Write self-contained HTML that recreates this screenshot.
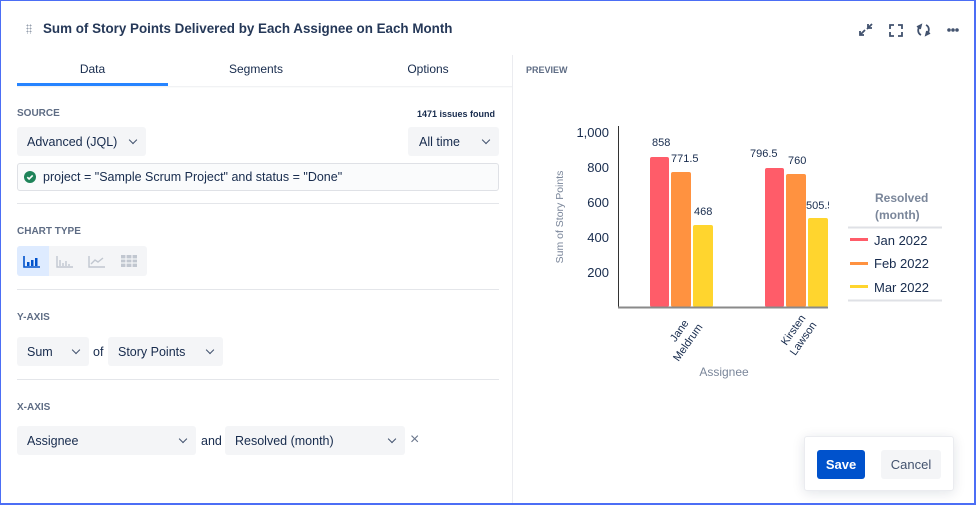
<!DOCTYPE html>
<html><head><meta charset="utf-8"><style>
*{box-sizing:border-box;margin:0;padding:0}
body{width:976px;height:505px;overflow:hidden;background:#fff;font-family:"Liberation Sans",sans-serif;color:#172b4d;position:relative}
.frame{position:absolute;inset:0;border:1px solid #4c6ef5;border-right-width:2px;border-bottom-width:2px}
.a{position:absolute;white-space:nowrap}
.lbl{font-size:10px;font-weight:bold;color:#5e6c84}
.sel{position:absolute;background:#f4f5f7;border-radius:3px;font-size:12.5px;color:#172b4d;padding:0 10px;display:flex;align-items:center;justify-content:space-between;height:29px;white-space:nowrap}
.chev{width:6px;height:6px;border-right:1.6px solid #42526e;border-bottom:1.6px solid #42526e;transform:rotate(45deg);margin-top:-4px;margin-left:10px;flex:none}
.hr{position:absolute;left:17px;width:482px;height:1px;background:#e4e6ea}
svg text{font-family:"Liberation Sans",sans-serif}
</style></head><body>
<div class="a" style="left:26px;top:24px;width:6px;height:10px;background:radial-gradient(circle,#97a0af 0.8px,transparent 1px) 0 0/3px 3px"></div>
<div class="a" style="left:43px;top:21px;font-size:13.4px;font-weight:bold;color:#253858">Sum of Story Points Delivered by Each Assignee on Each Month</div>
<svg class="a" style="left:856px;top:20px" width="110" height="20" viewBox="0 0 110 20" fill="none" stroke="#42526e" stroke-width="1.8">
<path d="M4 15l5-5M4 11v4h4M16 4l-5 5M16 8h-4V4"/>
<path d="M34 9V5h4M42 5h4v4M46 12v4h-4M38 16h-4v-4"/>
<path d="M65 6a5 5 0 0 0 0 9M61 7l4-2-1 4M70 14a5 5 0 0 0 0-9M74 13l-4 2 1-4"/>
<circle cx="93" cy="10" r="0.9" fill="#42526e"/><circle cx="97" cy="10" r="0.9" fill="#42526e"/><circle cx="101" cy="10" r="0.9" fill="#42526e"/>
</svg>
<div class="a" style="left:512px;top:55px;width:1px;height:450px;background:#ebecf0"></div>
<div class="a" style="left:17px;top:62px;width:151px;text-align:center;font-size:12px">Data</div>
<div class="a" style="left:168px;top:62px;width:176px;text-align:center;font-size:12px">Segments</div>
<div class="a" style="left:344px;top:62px;width:168px;text-align:center;font-size:12px">Options</div>
<div class="a" style="left:17px;top:86px;width:495px;height:2px;background:linear-gradient(#eceef1,#fff)"></div>
<div class="a" style="left:17px;top:83px;width:151px;height:3px;background:#2684ff"></div>
<div class="a lbl" style="left:17px;top:108px">SOURCE</div>
<div class="a" style="left:417px;top:109px;font-size:9px;font-weight:bold">1471 issues found</div>
<div class="sel" style="left:17px;top:127px;width:129px">Advanced (JQL)<span class="chev"></span></div>
<div class="sel" style="left:408px;top:127px;width:91px;padding-left:11px">All time<span class="chev"></span></div>
<div class="a" style="left:17px;top:163px;width:482px;height:28px;border:1px solid #dfe1e6;border-radius:3px;background:#fafbfc;font-size:12.5px;padding:6px 0 0 25px">project = "Sample Scrum Project" and status = "Done"</div>
<svg class="a" style="left:23px;top:170px" width="14" height="14"><circle cx="7" cy="7" r="6" fill="#1f845a"/><path d="M4.3 7.2l1.8 1.8 3.6-3.6" stroke="#fff" stroke-width="1.6" fill="none"/></svg>
<div class="hr" style="top:203px"></div>
<div class="a lbl" style="left:17px;top:226px">CHART TYPE</div>
<div class="a" style="left:17px;top:246px;width:130px;height:30px;background:#f4f5f7;border-radius:3px"></div>
<div class="a" style="left:17px;top:246px;width:32px;height:30px;background:#deebff;border-radius:3px 0 0 3px"></div>
<svg class="a" style="left:22px;top:251px" width="120" height="20" fill="none">
<path d="M2 5v11h16" stroke="#0052cc" stroke-width="1.6"/><rect x="5" y="11" width="2.5" height="4" fill="#0052cc"/><rect x="9" y="9" width="2.5" height="6" fill="#0052cc"/><rect x="13" y="7" width="2.5" height="8" fill="#0052cc"/>
<g stroke="#c1c7d0" stroke-width="1.4"><path d="M35 5v11h16M38 9v6M41 12v3M44 10v5M47 13v2"/><path d="M67 5v11h16M69 13l4-4 3 2 5-4"/></g>
<rect x="99" y="4" width="16" height="12" fill="#c1c7d0"/><path d="M99 8h16M99 12h16M104 4v12M110 4v12" stroke="#f4f5f7" stroke-width="1.2"/>
</svg>
<div class="hr" style="top:289px"></div>
<div class="a lbl" style="left:17px;top:312px">Y-AXIS</div>
<div class="sel" style="left:17px;top:337px;width:72px">Sum<span class="chev"></span></div>
<div class="a" style="left:93px;top:345px;font-size:12.5px">of</div>
<div class="sel" style="left:108px;top:337px;width:115px">Story Points<span class="chev"></span></div>
<div class="hr" style="top:379px"></div>
<div class="a lbl" style="left:17px;top:402px">X-AXIS</div>
<div class="sel" style="left:17px;top:426px;width:179px">Assignee<span class="chev"></span></div>
<div class="a" style="left:201px;top:434px;font-size:12.5px">and</div>
<div class="sel" style="left:225px;top:426px;width:180px">Resolved (month)<span class="chev"></span></div>
<div class="a" style="left:410px;top:431px;font-size:16px;color:#6b778c">×</div>
<div class="a lbl" style="left:526px;top:65px;font-size:9px">PREVIEW</div>
<svg class="a" style="left:0;top:0" width="976" height="505">
<g font-size="13" fill="#172b4d" text-anchor="end"><text x="609" y="137">1,000</text><text x="609" y="172">800</text><text x="609" y="207">600</text><text x="609" y="242">400</text><text x="609" y="277">200</text></g>
<text transform="translate(563,217) rotate(-90)" font-size="10.5" fill="#7a869a" text-anchor="middle">Sum of Story Points</text>
<g>
<rect x="650" y="157" width="19" height="150" rx="2" fill="#ff5c69"/><rect x="671" y="172" width="20" height="135" rx="2" fill="#ff9240"/><rect x="693" y="225" width="20" height="82" rx="2" fill="#ffd52e"/>
<rect x="765" y="168" width="19" height="139" rx="2" fill="#ff5c69"/><rect x="786" y="174" width="20" height="133" rx="2" fill="#ff9240"/><rect x="808" y="218" width="20" height="89" rx="2" fill="#ffd52e"/>
</g>
<path d="M618.5 126v181" stroke="#333" stroke-width="1"/><path d="M618 307.5h210" stroke="#8a8a8a" stroke-width="2"/>
<g font-size="11" fill="#172b4d"><text x="652" y="146">858</text><text x="671" y="162">771.5</text><text x="694" y="215">468</text><text x="750" y="157">796.5</text><text x="788" y="164">760</text><text x="806" y="209">505.5</text></g>
<g font-size="11" fill="#172b4d" text-anchor="end"><text transform="translate(689,323) rotate(-55)">Jane</text><text transform="translate(703,327) rotate(-55)">Meldrum</text><text transform="translate(806,318) rotate(-55)">Kirsten</text><text transform="translate(817,325) rotate(-55)">Lawson</text></g>
<text x="724" y="376" font-size="12" fill="#7a869a" text-anchor="middle">Assignee</text>
<rect x="829" y="128" width="20" height="200" fill="#fff"/>
<g font-size="12" font-weight="bold" fill="#7a869a"><text x="875" y="202">Resolved</text><text x="875" y="219">(month)</text></g>
<path d="M848 227.5h94M848 300.5h94" stroke="#dfe1e6" stroke-width="2"/>
<rect x="850" y="238" width="18" height="3" fill="#ff5c69"/><rect x="850" y="262" width="18" height="3" fill="#ff9240"/><rect x="850" y="285" width="18" height="3" fill="#ffd52e"/>
<g font-size="13" fill="#172b4d"><text x="874" y="245">Jan 2022</text><text x="874" y="268">Feb 2022</text><text x="874" y="292">Mar 2022</text></g>
</svg>
<div class="a" style="left:804px;top:436px;width:150px;height:55px;background:#fff;border:1px solid #ebecf0;border-radius:3px;box-shadow:0 2px 12px rgba(9,30,66,0.12)"></div>
<div class="a" style="left:817px;top:450px;width:48px;height:29px;background:#0052cc;border-radius:3px;color:#fff;font-size:13px;font-weight:bold;text-align:center;line-height:29px">Save</div>
<div class="a" style="left:881px;top:450px;width:60px;height:29px;background:#f4f5f7;border-radius:3px;color:#42526e;font-size:13px;text-align:center;line-height:29px">Cancel</div>
<div class="frame"></div>
</body></html>
